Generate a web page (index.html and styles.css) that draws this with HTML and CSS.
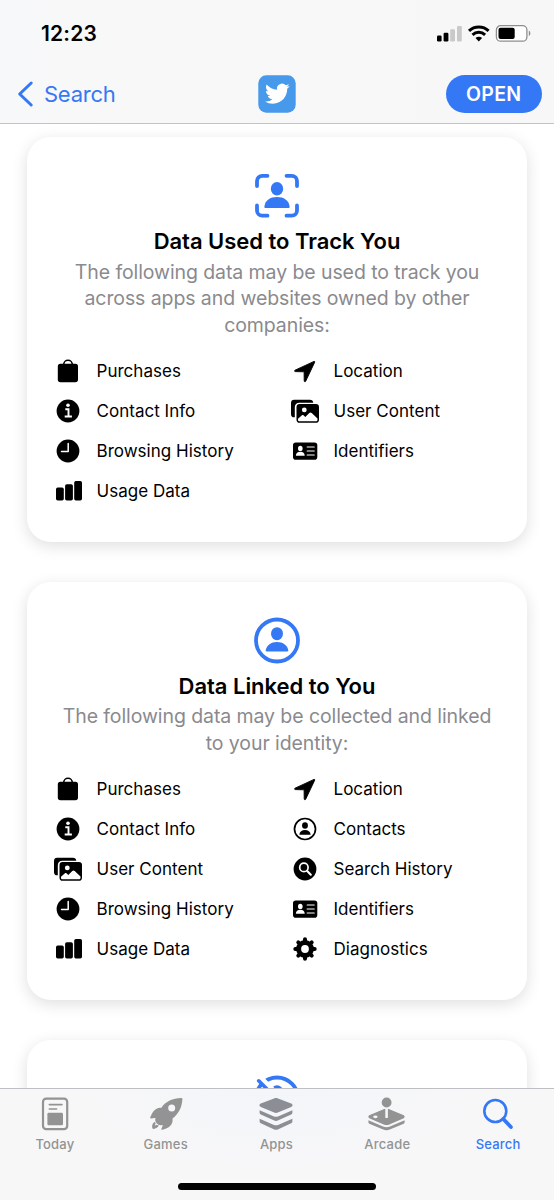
FILE: index.html
```html
<!DOCTYPE html>
<html lang="en">
<head>
<meta charset="utf-8">
<title>App Privacy</title>
<link rel="stylesheet" href="styles.css">
</head>
<body>
<svg class="sprite" aria-hidden="true">
  <symbol id="bag" viewBox="0 0 28 28"><path d="M9.7 8V7.6a4.3 4.3 0 0 1 8.6 0V8" fill="none" stroke="#000" stroke-width="1.6"/><rect x="3.8" y="6.8" width="20.2" height="18.4" rx="2.6"/></symbol>
  <symbol id="info" viewBox="0 0 28 28"><circle cx="14" cy="14" r="11.4"/><circle cx="14" cy="8.3" r="1.8" fill="#fff"/><path d="M11.3 12.2h3.200v7.300M10.700 19.500h7.200" fill="none" stroke="#fff" stroke-width="1.900"/></symbol>
  <symbol id="clock" viewBox="0 0 28 28"><circle cx="14" cy="14" r="11.4"/><path d="M14.2 6.6v8H7.5" fill="none" stroke="#fff" stroke-width="1.5" stroke-linecap="round" stroke-linejoin="round"/></symbol>
  <symbol id="bars" viewBox="0 0 28 28"><rect x="2" y="10.5" width="7.8" height="12.9" rx="1.700"/><rect x="11.1" y="7.2" width="7.8" height="16.2" rx="1.700"/><rect x="20.2" y="4.1" width="7.8" height="19.3" rx="1.700"/></symbol>
  <symbol id="arrow" viewBox="0 0 28 28"><path d="M23 4.4 4 13.2c-.7.4-.5 1.4.3 1.4l8.3.2c.3 0 .5.1.5.5l.1 8.6c0 1 1.1 1.1 1.5.3l9-19c.2-.6-.1-1-.7-.8Z" stroke="#000" stroke-width=".9"/></symbol>
  <symbol id="photos" viewBox="0 0 28 28"><path d="M3.2 20.3C1.100 20.300 0 19.200 0 17.200V6C0 3.900 1.100 2.700 3.200 2.700h15.700c2 0 3.200 1 3.400 3H8.500c-3 0-4.700 1.700-4.700 4.600v10Z"/><path fill-rule="evenodd" d="M8.600 6.900h16.300c2 0 3.100 1.100 3.100 3.100v12.700c0 2-1.100 3.100-3.100 3.100H8.600c-2 0-3.100-1.100-3.100-3.100V10c0-2 1.100-3.100 3.100-3.100Z"/><circle cx="13.300" cy="12.900" r="2.400" fill="#fff"/><path d="M7 21.800l3.700-3.300c.7-.6 1.300-.6 2 0l1.600 1.500 4-3.900c.8-.8 1.600-.8 2.400 0l5.800 5.500v1.100c0 1-.6 1.600-1.600 1.600H8.700c-1.100 0-1.700-.6-1.700-1.600Z" fill="#fff"/></symbol>
  <symbol id="idcard" viewBox="0 0 28 28"><rect x="2" y="5.400" width="24.300" height="17.300" rx="2.800"/><ellipse cx="9.300" cy="11.400" rx="2.300" ry="2.700" fill="#fff"/><path d="M4.900 18.700c0-2.400 1.700-4 4.400-4s4.400 1.600 4.400 4Z" fill="#fff"/><path d="M16.200 10h7M16.200 14h7M16.200 18h7" stroke="#fff" stroke-width="1.200" stroke-linecap="round"/></symbol>
  <symbol id="contact" viewBox="0 0 28 28"><circle cx="14" cy="14" r="10.500" fill="none" stroke="#000" stroke-width="1.700"/><ellipse cx="14" cy="10.500" rx="2.900" ry="3.300"/><path d="M8.400 19.300c.3-2.600 2.500-4.200 5.600-4.200s5.300 1.600 5.600 4.200c0 .4-.2.500-.5.500H8.900c-.3 0-.5-.1-.5-.5Z"/></symbol>
  <symbol id="searchdot" viewBox="0 0 28 28"><circle cx="14" cy="14" r="11.400"/><circle cx="12.900" cy="12.400" r="4.200" fill="none" stroke="#fff" stroke-width="1.700"/><path d="m16.200 16 3.600 3.700" stroke="#fff" stroke-width="2.100" stroke-linecap="round"/></symbol>
  <symbol id="gear" viewBox="0 0 28 28"><g stroke="#000" stroke-width="4" stroke-linecap="round"><path d="M14 4.300v19.400M4.300 14h19.400M7.300 7.300l13.400 13.400M20.700 7.300 7.300 20.700"/></g><circle cx="14" cy="14" r="8.900"/><circle cx="14" cy="14" r="3.900" fill="#fff"/></symbol>
</svg>

<header class="top">
  <div class="status">
    <span class="time">12:23</span>
    <svg class="indicators" width="96" height="20" viewBox="0 0 96 20">
      <rect x="1" y="11.500" width="4.600" height="6" rx="1.200"/><rect x="7.600" y="8.700" width="4.800" height="8.800" rx="1.200"/>
      <g fill="#c9c9c9"><rect x="14.200" y="5.300" width="4.800" height="12.200" rx="1.200"/><rect x="21" y="2" width="4.800" height="15.500" rx="1.200"/></g>
      <g fill="none" stroke="#000" stroke-width="3"><path d="M33 6.900c5.500-5.200 14.100-5.200 19.600 0"/><path d="M36.500 10.900c3.600-3.400 9-3.400 12.600 0"/></g>
      <path d="m42.800 17.600-3.300-3.500c1.900-1.700 4.700-1.700 6.600 0Z"/>
      <rect x="60.400" y="1.700" width="30.500" height="15.500" rx="4.300" fill="#fff" stroke="#8e8e8e" stroke-width="1.300"/><rect x="62.500" y="3.800" width="16.200" height="11.300" rx="2"/><path d="M92.800 6.800c2.100.6 2.100 4.600 0 5.200Z" fill="#8e8e8e"/>
    </svg>
  </div>
  <nav class="nav">
    <a class="back"><svg width="18" height="28" viewBox="0 0 18 28"><path d="M15.200 3 3.700 14l11.500 11" fill="none" stroke="currentColor" stroke-width="3" stroke-linecap="round" stroke-linejoin="round"/></svg><span>Search</span></a>
    <svg class="app" width="38" height="38" viewBox="0 0 38 38"><rect x=".3" y=".3" width="37.400" height="37.400" rx="8" fill="#4799eb"/><path transform="translate(7 6.300) scale(1.030)" fill="#fff" d="M23.953 4.570a10 10 0 01-2.825.775 4.958 4.958 0 002.163-2.723c-.951.555-2.005.959-3.127 1.184a4.920 4.920 0 00-8.384 4.482C7.690 8.095 4.067 6.130 1.640 3.162a4.822 4.822 0 00-.666 2.475c0 1.710.870 3.213 2.188 4.096a4.904 4.904 0 01-2.228-.616v.060a4.923 4.923 0 003.946 4.827 4.996 4.996 0 01-2.212.085 4.936 4.936 0 004.604 3.417 9.867 9.867 0 01-6.102 2.105c-.390 0-.779-.023-1.170-.067a13.995 13.995 0 007.557 2.209c9.053 0 13.998-7.496 13.998-13.985 0-.210 0-.420-.015-.630A9.935 9.935 0 0024 4.590z"/></svg>
    <div class="nav-end"><button class="open">OPEN</button></div>
  </nav>
</header>

<main class="content">
  <section class="card">
    <svg class="hero" width="46" height="46" viewBox="0 0 46 46"><g fill="none" stroke="#3478f6" stroke-width="3.800" stroke-linecap="round"><path d="M3 13V8a5.200 5.200 0 0 1 5.200-5.200h5.300M32.500 2.800h5.300A5.200 5.200 0 0 1 43 8v5M43 32.500v5a5.200 5.200 0 0 1-5.200 5.200h-5.300M13.500 42.700H8.200A5.200 5.200 0 0 1 3 37.500v-5"/></g><ellipse cx="23" cy="15.700" rx="6.200" ry="6.700" fill="#3478f6"/><path d="M10.400 33.400c.8-6 5.800-9.300 12.600-9.300s11.800 3.300 12.600 9.300c.1 1-.3 1.700-1.300 1.700H11.700c-1 0-1.400-.7-1.300-1.700Z" fill="#3478f6"/></svg>
    <h2>Data Used to Track You</h2>
    <p>The following data may be used to track you<br>across apps and websites owned by other<br>companies:</p>
    <ul class="list">
      <li><svg><use href="#bag"/></svg>Purchases</li><li><svg><use href="#arrow"/></svg>Location</li>
      <li><svg><use href="#info"/></svg>Contact Info</li><li><svg><use href="#photos"/></svg>User Content</li>
      <li><svg><use href="#clock"/></svg>Browsing History</li><li><svg><use href="#idcard"/></svg>Identifiers</li>
      <li><svg><use href="#bars"/></svg>Usage Data</li>
    </ul>
  </section>
  <section class="card">
    <svg class="hero" width="46" height="46" viewBox="0 0 46 46"><circle cx="23" cy="22.500" r="21" fill="none" stroke="#3478f6" stroke-width="3.800"/><ellipse cx="23" cy="15.700" rx="6" ry="6.500" fill="#3478f6"/><path d="M11.700 32.200c1-5 5.300-8.200 11.300-8.200s10.300 3.200 11.300 8.200c.1.800-.3 1.200-1.100 1.200H12.800c-.8 0-1.200-.4-1.100-1.200Z" fill="#3478f6"/></svg>
    <h2>Data Linked to You</h2>
    <p>The following data may be collected and linked<br>to your identity:</p>
    <ul class="list">
      <li><svg><use href="#bag"/></svg>Purchases</li><li><svg><use href="#arrow"/></svg>Location</li>
      <li><svg><use href="#info"/></svg>Contact Info</li><li><svg><use href="#contact"/></svg>Contacts</li>
      <li><svg><use href="#photos"/></svg>User Content</li><li><svg><use href="#searchdot"/></svg>Search History</li>
      <li><svg><use href="#clock"/></svg>Browsing History</li><li><svg><use href="#idcard"/></svg>Identifiers</li>
      <li><svg><use href="#bars"/></svg>Usage Data</li><li><svg><use href="#gear"/></svg>Diagnostics</li>
    </ul>
  </section>
  <section class="card">
    <svg class="hero" width="46" height="46" viewBox="0 0 46 46"><circle cx="23" cy="22.500" r="21" fill="none" stroke="#3478f6" stroke-width="3.800"/><ellipse cx="23" cy="15.700" rx="6" ry="6.500" fill="#3478f6"/><path d="m2 -1.500 40 40" stroke="#fff" stroke-width="7"/><path d="m4.700 4.800 36 36" stroke="#3478f6" stroke-width="3.600" stroke-linecap="round"/></svg>
  </section>
</main>

<footer class="bottom">
  <nav class="tabs">
    <a><svg width="40" height="36" viewBox="0 0 40 36"><rect x="8" y="2.700" width="24.200" height="30.400" rx="3.200" fill="none" stroke="currentColor" stroke-width="2.200"/><path d="M14.300 8.600h12.700M14.300 13h7.300" stroke="currentColor" stroke-width="1.600" stroke-linecap="round"/><rect x="12.400" y="16.800" width="15.600" height="12.500" rx="1.400" fill="currentColor"/></svg><span>Today</span></a>
    <a><svg width="40" height="36" viewBox="0 0 40 36" fill="currentColor"><path fill-rule="evenodd" d="M35.200 2C26.700 2.200 19.800 5.200 15.200 11.900 10.900 11 6.800 14.500 4.300 21.300c-.3 1 .3 1.500 1.200 1.200 1.500-.6 2.800-.7 4-.5l-.4 1.900c.5 2.700 2.400 4.800 5.500 5.300l2-.2c.1 1.200-.3 2.200-1.100 3.500-.5 1-.1 1.500.9 1.300 7.400-1.400 11-6 10.100-11.200 6.400-4.800 9.500-11.600 9.900-19.300 0-.9-.3-1.300-1.200-1.300ZM25.700 8.600a3.500 3.500 0 1 1 0 7 3.500 3.500 0 0 1 0-7Z"/><path d="M8.400 26c-2.100 1.500-2.600 3.800-2.100 6.100.1.600.5.900 1.100.8 2.700-.2 4.500-1.500 5.400-3.300l-2.100-.8c-.5.500-1.100.8-1.700.8-.1-1 .2-1.700.9-2.500Z"/></svg><span>Games</span></a>
    <a><svg width="40" height="36" viewBox="0 0 40 36" fill="#8b8e94"><path d="M3.500 9.200c0-.7.500-1.200 1.300-1.600L18 2.500c1.400-.6 2.600-.6 4 0l13.200 5.100c.8.400 1.300.9 1.300 1.600s-.5 1.300-1.300 1.700L22.400 16.300c-1.700.8-3.100.8-4.800 0L4.800 10.900c-.8-.4-1.300-1-1.300-1.700Z"/><path d="M3.600 14.300 18 20.400c1.400.6 2.600.6 4 0l14.400-6.100v2.500c0 .8-.4 1.300-1.200 1.700L22.300 24.300c-1.600.8-3 .8-4.600 0L4.800 18.500c-.8-.4-1.200-.9-1.200-1.700ZM3.600 22.800 18 28.900c1.400.6 2.600.6 4 0l14.400-6.100v2.700c0 .8-.4 1.300-1.200 1.700L22.300 33.200c-1.600.8-3 .8-4.600 0L4.800 27.200c-.8-.4-1.200-.9-1.200-1.700Z"/></svg><span>Apps</span></a>
    <a><svg width="40" height="36" viewBox="0 0 40 36" fill="currentColor"><path d="M1.400 20.800c0-.8.5-1.300 1.400-1.700l14.400-6c1.500-.6 3.100-.6 4.600 0l14.400 6c.9.400 1.400.9 1.400 1.700s-.5 1.300-1.400 1.700l-13.900 5.900c-1.900.8-3.700.8-5.600 0L2.800 22.500c-.9-.4-1.400-.9-1.400-1.700Z"/><path d="M1.400 24.200 16 30.500c2.400 1 4.600 1 7 0l14.600-6.300v2c0 .9-.6 1.400-1.500 1.800l-13.300 5.600c-2.200.9-4.400.9-6.600 0L2.900 28c-.9-.4-1.500-.9-1.500-1.800Z"/><path d="M18.300 12h2.600v9.500c0 .8-2.600.8-2.600 0Z" fill="#f7f7f8"/><ellipse cx="8.400" cy="20.800" rx="2.200" ry="1.400" fill="#f7f7f8"/><circle cx="19.600" cy="6.500" r="4.900"/></svg><span>Arcade</span></a>
    <a class="active"><svg width="40" height="36" viewBox="0 0 40 36"><circle cx="17.300" cy="15" r="11" fill="none" stroke="currentColor" stroke-width="2.600"/><path d="m25.300 23 7.600 8" stroke="currentColor" stroke-width="3.800" stroke-linecap="round"/></svg><span>Search</span></a>
  </nav>
  <div class="home"></div>
</footer>
</body>
</html>
```

FILE: styles.css
```css
* { box-sizing: border-box; }
body {
  margin: 0;
  height: 1200px;
  display: flex;
  flex-direction: column;
  overflow: hidden;
  background: #fff;
  color: #000;
  font-family: Inter, "Liberation Sans", sans-serif;
}
.sprite { display: none; }
svg { display: block; flex: none; overflow: visible; }

.top {
  height: 124px;
  flex: none;
  background: linear-gradient(90deg, #f7f8f9, #f7f7f7);
  border-bottom: 1px solid #bfc5c7;
}
.status {
  height: 67px;
  display: flex;
  align-items: center;
  justify-content: space-between;
  padding: 0 22px 0 41px;
}
.time { font-size: 21px; font-weight: 600; letter-spacing: 0.2px; }
.nav {
  height: 54px;
  display: grid;
  grid-template-columns: 1fr 38px 1fr;
  align-items: center;
  padding: 0 12px 0 16px;
}
.back {
  display: flex;
  align-items: center;
  gap: 10px;
  color: #3478f6;
  font-size: 22px;
  letter-spacing: -0.25px;
}
.app { margin-left: -2px; }
.nav-end { display: flex; justify-content: flex-end; }
.open {
  width: 96.500px;
  height: 38px;
  padding: 0;
  border: 0;
  border-radius: 19px;
  background: #3478f6;
  color: #fff;
  font: 600 19.500px Inter, sans-serif;
  letter-spacing: 0.3px;
}

.content {
  flex: 1;
  min-height: 0;
  overflow: hidden;
  display: flex;
  flex-direction: column;
  gap: 40px;
  padding: 13px 27px 0;
}
.card {
  flex: none;
  display: flex;
  flex-direction: column;
  align-items: center;
  padding: 36px 0 30.500px;
  border-radius: 24px;
  background: #fff;
  box-shadow: 0 4px 16px rgba(0, 0, 0, 0.13);
}
.hero { margin-bottom: 9px; }
.card h2 {
  margin: 0;
  font-size: 22px;
  line-height: 26px;
  font-weight: 600;
  letter-spacing: -0.030px;
}
.card p {
  margin: 4.500px 0 11.600px;
  font-size: 19.500px;
  line-height: 26.800px;
  letter-spacing: -0.090px;
  color: #8a8a8e;
  text-align: center;
  white-space: nowrap;
}
.list {
  align-self: stretch;
  list-style: none;
  margin: 0;
  padding: 0 0 0 27px;
  display: grid;
  grid-template-columns: 237px 1fr;
  grid-auto-rows: 40.200px;
}
.list li {
  display: flex;
  align-items: center;
  gap: 14.500px;
  font-size: 17px;
  letter-spacing: 0.020px;
}
.list svg { width: 28px; height: 28px; }

.bottom {
  height: 112px;
  flex: none;
  border-top: 1px solid #bdbfc2;
  background: radial-gradient(ellipse 190px 80px at 50% 0, #f3f5fa, #f7f7f8);
}
.tabs { display: grid; grid-template-columns: repeat(5, 1fr); height: 93.500px; }
.tabs a {
  display: flex;
  flex-direction: column;
  align-items: center;
  gap: 4px;
  padding: 7px 1px 0 0;
  color: #939393;
  font-size: 13px;
  line-height: 16px;
  font-weight: 500;
  letter-spacing: 0.2px;
}
.tabs .active { color: #3478f6; }
.home { width: 198px; height: 7px; margin: 0 auto; border-radius: 4px; background: #000; }
```
